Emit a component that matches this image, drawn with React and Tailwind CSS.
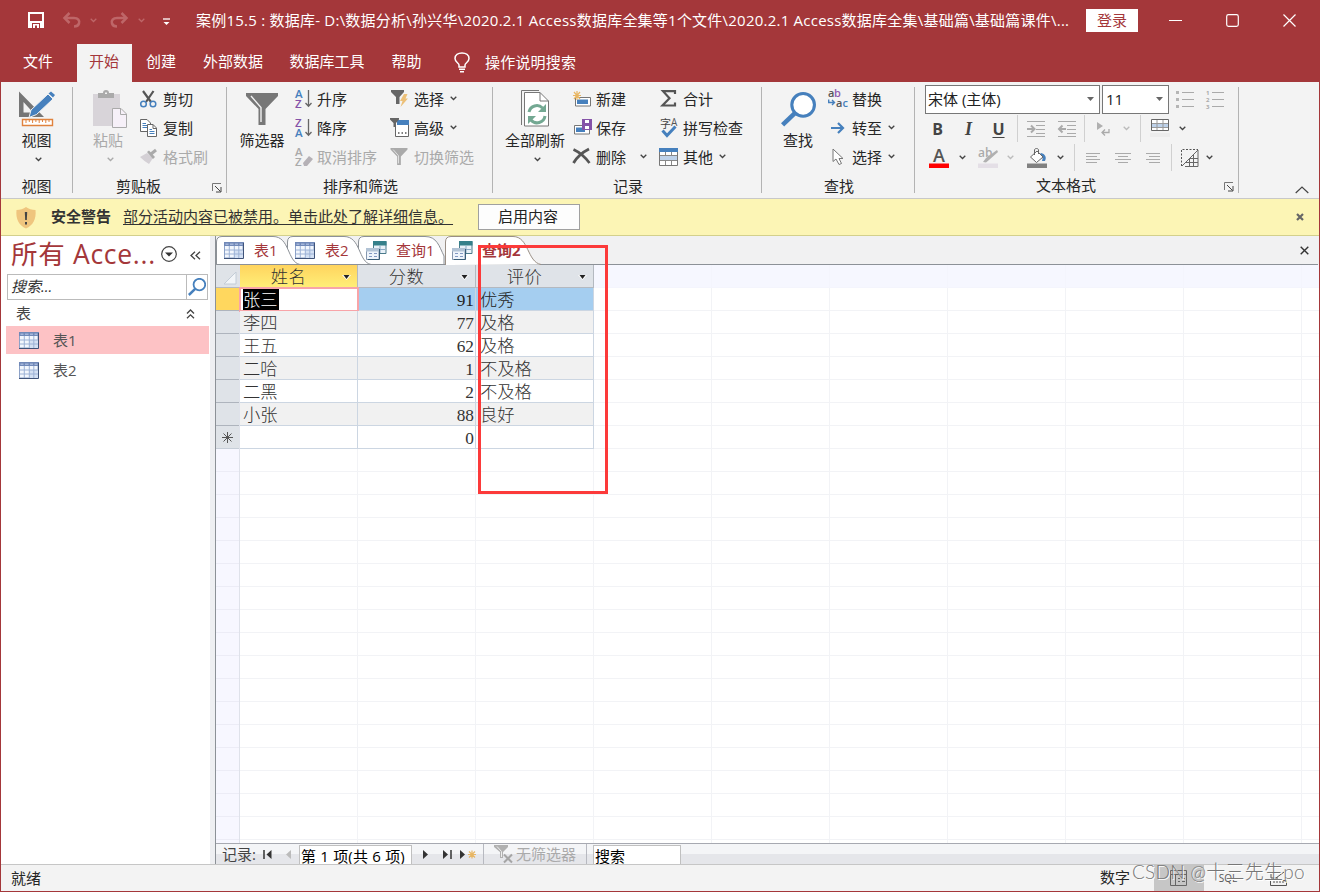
import { Fragment } from "react";
import clsx from "clsx";

const MENU = [
  { label: "创建", width: "w-[58px]" },
  { label: "外部数据", width: "w-[86px]" },
  { label: "数据库工具", width: "w-[102px]" },
  { label: "帮助", width: "w-[57px]" },
];

const ROWS = [
  { name: "张三", score: 91, grade: "优秀" },
  { name: "李四", score: 77, grade: "及格" },
  { name: "王五", score: 62, grade: "及格" },
  { name: "二哈", score: 1, grade: "不及格" },
  { name: "二黑", score: 2, grade: "不及格" },
  { name: "小张", score: 88, grade: "良好" },
];

/* ── icons ── */

function Svg({ w, h, children, className }) {
  return (
    <svg width={w} height={h} viewBox={`0 0 ${w} ${h}`} fill="none" className={clsx("block shrink-0 overflow-visible", className)}>
      {children}
    </svg>
  );
}

function Chevron({ color = "#444", className }) {
  return (
    <Svg w={7} h={5} className={className}>
      <path d="M0.7 0.8L3.5 3.5L6.3 0.8" stroke={color} strokeWidth="1.3" />
    </Svg>
  );
}

function Triangle({ color = "#666" }) {
  return (
    <Svg w={7} h={4}>
      <path d="M0 0H7L3.5 4Z" fill={color} />
    </Svg>
  );
}

function SaveIcon() {
  return (
    <Svg w={16} h={16}>
      <path d="M1 1H15V15H1Z" stroke="#fff" strokeWidth="2" />
      <path d="M2 9H14V15H2Z" fill="#fff" />
      <path d="M4 11H12V16H4Z" fill="#a4373a" />
      <path d="M5 12H11V16H9V13.5H7V16H5Z" fill="#fff" />
    </Svg>
  );
}

function UndoIcon({ flip }) {
  return (
    <Svg w={18} h={16} className={flip ? "-scale-x-100" : ""}>
      <path d="M2 6H11C15 6 17 8.5 16 11.5C15.3 13.6 13.5 14.5 11 14.5" stroke="#be6668" strokeWidth="2.5" />
      <path d="M6.5 1L1.5 6L6.5 11" stroke="#be6668" strokeWidth="2.5" />
    </Svg>
  );
}

function BulbIcon() {
  return (
    <Svg w={16} h={21}>
      <path d="M5 15V13C5 11 1 10 1 6.5C1 3 4 1 8 1S15 3 15 6.5C15 10 11 11 11 13V15Z" stroke="#fff" strokeWidth="1.5" />
      <path d="M5 17.3H11M6 19.7H10" stroke="#fff" strokeWidth="1.6" />
    </Svg>
  );
}

function DesignViewIcon() {
  return (
    <Svg w={38} h={38}>
      <path fillRule="evenodd" d="M1 1.5V27H26ZM5.5 12L15 22.5H5.5Z" fill="#767676" />
      <path d="M11 27.5L13 20L30 4L35 9L18.500 24.500Z" fill="#4680bd" stroke="#f3f3f3" strokeWidth="1" />
      <path d="M30.500 3.500L33 1.500L37 5L35 7.500Z" fill="#4680bd" />
      <path d="M4.500 29.500H34.500V35.500H4.500Z" fill="#fff" stroke="#e0823d" strokeWidth="1.400" />
      <path d="M8 30V33M11.300 30V32M14.600 30V33M17.900 30V32M21.200 30V33M24.500 30V32M27.800 30V33M31 30V32" stroke="#e0823d" />
    </Svg>
  );
}

function PasteIcon() {
  return (
    <Svg w={36} h={39}>
      <path d="M1 4H28V36H1Z" fill="#d8d4d9" />
      <path d="M6 3H11C11 1 12 0 14 0S17 1 17 3H22V8H6Z" fill="#aaa" />
      <path d="M13 2.500H15V4H13Z" fill="#f3f3f3" />
      <path d="M20.500 18.500H29L34.500 24V37.500H20.500Z" fill="#f6f0f8" stroke="#aaa" />
      <path d="M28.500 18.500V24.500H34.500" stroke="#aaa" />
    </Svg>
  );
}

function CutIcon() {
  return (
    <Svg w={17} h={18}>
      <path d="M3 1L11 12M13.500 1L6 12" stroke="#555" strokeWidth="2.200" />
      <circle cx="3.500" cy="14" r="2.800" stroke="#4680bd" strokeWidth="1.500" />
      <circle cx="13" cy="14" r="2.800" stroke="#4680bd" strokeWidth="1.500" />
    </Svg>
  );
}

function CopyIcon() {
  return (
    <Svg w={18} h={18}>
      <path d="M.5 .5H7L10.500 4V12.500H.5Z" fill="#fff" stroke="#666" />
      <path d="M2.500 4.500H6M2.500 6.500H7M2.500 8.500H7" stroke="#4680bd" />
      <path d="M7.500 5.500H13L16.500 9V17.500H7.500Z" fill="#fff" stroke="#666" />
      <path d="M13 5.500V9.500H16.500" stroke="#666" />
      <path d="M9.500 10.500H12M9.500 12.500H14.500M9.500 14.500H14.500" stroke="#4680bd" />
    </Svg>
  );
}

function BrushIcon() {
  return (
    <Svg w={18} h={16}>
      <path d="M0 8L7 4L13 9L9 15C6 13 3 11 0 8Z" fill="#d4d0d5" />
      <path d="M7 3L9 1.500L15 8L13 10Z" fill="#aaa" />
      <path d="M11 5L16 1" stroke="#aaa" strokeWidth="3" />
    </Svg>
  );
}

function FunnelIcon({ w, h, color = "#777" }) {
  return (
    <svg width={w} height={h} viewBox="0 0 32 32" fill="none" className="block shrink-0">
      <path d="M0 0H32V3L19.500 16V32H12.500V16L0 3Z" fill={color} />
      <path d="M5 3L15 14.500V29" stroke="#f3f3f3" strokeWidth="1.400" />
    </svg>
  );
}

function SortIcon({ top, bottom, topColor, bottomColor, clear }) {
  return (
    <Svg w={19} h={20}>
      <text x="0" y="9" fontSize="11.500" fontWeight="600" fill={topColor}>{top}</text>
      <text x="0" y="19" fontSize="11.500" fontWeight="600" fill={bottomColor}>{bottom}</text>
      {clear ? (
        <path d="M8 16L14 9L18 12L12 19H9Z" fill="#b5b1b6" />
      ) : (
        <path d="M13.500 1V17M10.500 14L13.500 17.300L16.500 14" stroke="#666" strokeWidth="1.300" />
      )}
    </Svg>
  );
}

function SelectFilterIcon() {
  return (
    <Svg w={19} h={18}>
      <path d="M1 0H14V2L9.500 7V14H6V7L1 2Z" fill="#666" />
      <path d="M14 4H17.500L15.500 8.500H18L10.500 17L12.500 11H10Z" fill="#ecc078" />
    </Svg>
  );
}

function AdvancedIcon() {
  return (
    <Svg w={20} h={19}>
      <path d="M5.500 3.500H18.500V18.500H5.500Z" fill="#fff" stroke="#666" />
      <path d="M7 2H19V7H7Z" fill="#4680bd" />
      <path d="M0 0H9V1.500L6 5V9H3.500V5L0 1.500Z" fill="#666" />
      <path d="M8 15H9.500M11.500 15H13M15 15H16.500" stroke="#555" strokeWidth="1.500" />
    </Svg>
  );
}

function RefreshIcon() {
  return (
    <Svg w={29} h={37}>
      <path d="M.5 35V.5H18" stroke="#777" />
      <path d="M3.500 2.500H19L27.500 11V36H3.500Z" fill="#fff" stroke="#777" />
      <path d="M19 2.500V11H27.500" stroke="#777" />
      <path d="M8 22A8 8 0 0 1 21.500 18M24 26A8 8 0 0 1 10 30" stroke="#73a892" strokeWidth="3" />
      <path d="M25 14V22H17ZM7 34V26H15Z" fill="#73a892" />
    </Svg>
  );
}

function NewRecordIcon() {
  return (
    <Svg w={18} h={16}>
      <path d="M2.500 6.500H17.500V15H2.500Z" fill="#fff" stroke="#777" />
      <path d="M4 8.500H15V13H4Z" fill="#4680bd" />
      <path d="M4 0V9M0 4.500H8M1 1L7 8M7 1L1 8" stroke="#e8b663" strokeWidth="1.200" />
    </Svg>
  );
}

function SaveRecordIcon() {
  return (
    <Svg w={19} h={17}>
      <path d="M1.500 6.500H16.500V15H1.500Z" fill="#fff" stroke="#777" />
      <path d="M3 8.500H12V13H3Z" fill="#4680bd" />
      <path d="M9 0H19V11H9Z" fill="#8552a8" />
      <path d="M12 1H16V4H12ZM12 7H16V10H12Z" fill="#fff" />
    </Svg>
  );
}

function DeleteIcon() {
  return (
    <Svg w={19} h={17}>
      <path d="M1.500 1.500C7 4 13 9 17.500 15" stroke="#555" strokeWidth="2.600" />
      <path d="M17 1C11 4 5 9 1.500 15" stroke="#555" strokeWidth="2.800" />
    </Svg>
  );
}

function SigmaIcon() {
  return (
    <Svg w={15} h={17}>
      <path d="M14 4V1.200H2L8.500 8.300L1.500 15.500H14V12.500" stroke="#555" strokeWidth="2.200" />
    </Svg>
  );
}

function SpellIcon() {
  return (
    <Svg w={19} h={20}>
      <text x="0" y="10" fontSize="11" fill="#444">字</text>
      <text x="11" y="8" fontSize="10" fill="#555">A</text>
      <path d="M2.500 12.500L7 17.500L15.500 8.500" stroke="#4680bd" strokeWidth="3" />
    </Svg>
  );
}

function MoreIcon() {
  return (
    <Svg w={19} h={18}>
      <path d="M.5 .5H18.500V17.500H.5Z" fill="#fff" stroke="#777" />
      <path d="M0 0H19V4H0Z" fill="#4680bd" />
      <path d="M1 7.500H18V12H1Z" fill="#bed2ea" />
      <path d="M1 7.500H18M1 12.500H18M6.500 4V7M12.500 4V7M6.500 12V17M12.500 12V17" stroke="#888" />
    </Svg>
  );
}

function SearchIcon({ size, stroke = 3 }) {
  return (
    <svg width={size} height={size} viewBox="0 0 34 34" fill="none" className="block shrink-0">
      <path d="M1.500 32L13.500 20.500" stroke="#4680bd" strokeWidth={stroke + 1.5} />
      <circle cx="21.500" cy="12.500" r="11" fill="#fff" stroke="#4680bd" strokeWidth={stroke} />
    </svg>
  );
}

function ReplaceIcon() {
  return (
    <Svg w={20} h={19}>
      <text x="0" y="8" fontSize="11" fontWeight="600" fill="#555">a</text>
      <text x="6" y="8" fontSize="11" fontWeight="600" fill="#8f5cb0">b</text>
      <text x="8" y="17.500" fontSize="11" fontWeight="600" fill="#555">a</text>
      <text x="14.500" y="17.500" fontSize="11" fontWeight="600" fill="#4680bd">c</text>
      <path d="M.7 10.500V13.500H6M4 11L6.500 13.500L4 16" stroke="#4680bd" strokeWidth="1.400" />
    </Svg>
  );
}

function GotoIcon() {
  return (
    <Svg w={14} h={12}>
      <path d="M0 6H12M7 1L12 6L7 11" stroke="#4680bd" strokeWidth="2.200" />
    </Svg>
  );
}

function PointerIcon() {
  return (
    <Svg w={12} h={18}>
      <path d="M1 1V13.500L4 11L7 16.500L9.500 15.500L7 10.500H11Z" fill="#fff" stroke="#777" />
    </Svg>
  );
}

function LinesIcon({ lines, children, w = 18, h = 18, color = "#aaa" }) {
  return (
    <Svg w={w} h={h}>
      {lines.map(([x1, x2, y]) => (
        <path key={`${x1}-${y}`} d={`M${x1} ${y}H${x2}`} stroke={color} />
      ))}
      {children}
    </Svg>
  );
}

function DatasheetIcon() {
  return (
    <Svg w={20} h={17}>
      <path d="M.5 .5H19V16H.5Z" fill="#f3f7fd" stroke="#8da2c8" />
      <path d="M0 0H20V4H0Z" fill="#7189b8" />
      <path d="M1.500 1.500H4.500V3H1.500ZM6 1.500H9.500V3H6ZM11 1.500H14V3H11ZM15.500 1.500H18.500V3H15.500Z" fill="#a3b6da" />
      <path d="M10 8H19V16H10Z" fill="#d3e0f3" />
      <path d="M1 8H19M1 12H19M5.300 4V16M10.300 4V16M14.800 4V16" stroke="#9db2d6" />
      <path d="M19.500 1V16.500H0" stroke="#3f5379" />
    </Svg>
  );
}

function QueryIcon() {
  return (
    <Svg w={21} h={19}>
      <path d="M7.500 .5H20V12.500H7.500Z" fill="#e9f1f8" stroke="#4a7a8b" />
      <path d="M7 0H20.500V4.500H7Z" fill="#35808a" />
      <path d="M14 5V12M10 8.500H19" stroke="#8aa9c4" />
      <path d="M.5 7.500H13V18.500H.5Z" fill="#eef4fb" stroke="#8597ae" />
      <path d="M0 7H13V10.500H0Z" fill="#b2c3d5" />
      <path d="M3 12.500H6M3 15.500H6M8 12.500H11M8 15.500H11" stroke="#8298c2" />
      <path d="M13.500 8V18.500H2" stroke="#385d78" />
    </Svg>
  );
}

function LauncherIcon() {
  return (
    <Svg w={10} h={10}>
      <path d="M.5 8V.5H9" stroke="#777" />
      <path d="M3 3L8.500 8.500M9 4V9H4" stroke="#444" />
    </Svg>
  );
}

/* ── ribbon pieces ── */

function Divider() {
  return <div className="mt-[2px] h-[106px] w-px shrink-0 bg-[#b3b3b3]" />;
}

function Group({ label, width, launcher, labelPad = "pr-[3px]", children }) {
  return (
    <div className={clsx("flex shrink-0 flex-col", width)}>
      <div className="flex h-[88px]">{children}</div>
      <div className="flex h-[25px] items-center">
        <span className="w-4 shrink-0" />
        <span className={clsx("flex-1 text-center", labelPad)}>{label}</span>
        <span className="w-[14px] shrink-0 pt-[4px]">{launcher && <LauncherIcon />}</span>
      </div>
    </div>
  );
}

function BigButton({ icon, label, width, disabled, menu }) {
  return (
    <div className={clsx("flex shrink-0 flex-col items-center", width, disabled && "text-[#aaa]")}>
      <div className="flex h-[43px] items-start pt-[5px]">{icon}</div>
      <div className="flex h-6 items-center pb-px whitespace-nowrap">{label}</div>
      {menu && <Chevron color={disabled ? "#aaa" : "#444"} className="mt-[5px] ml-1" />}
    </div>
  );
}

function SmallButton({ icon, label, disabled, menu, gap = "ml-[6px]", iconWidth = "w-6" }) {
  return (
    <div className={clsx("flex h-[29px] items-center pb-[2px] whitespace-nowrap", disabled && "text-[#aaa]")}>
      <span className={clsx("flex shrink-0", iconWidth)}>{icon}</span>
      {label}
      {menu && <Chevron className={gap} />}
    </div>
  );
}

function Cell({ w, children }) {
  return <div className={clsx("flex h-[29px] shrink-0 items-center justify-center", w)}>{children}</div>;
}

function Rule() {
  return <div className="h-[27px] w-px shrink-0 bg-[#d0d0d0]" />;
}

function TitleBar() {
  return (
    <div className="flex h-[43px] items-center pb-[3px] text-white">
      <div className="ml-[27px] flex items-center">
        <SaveIcon />
        <span className="ml-[19px]"><UndoIcon /></span>
        <Chevron color="#be6668" className="ml-[9px]" />
        <span className="ml-[13px]"><UndoIcon flip /></span>
        <Chevron color="#be6668" className="ml-[10px]" />
        <Svg w={7} h={8} className="mt-1 ml-[18px]">
          <path d="M0 1H7" stroke="#fff" strokeWidth="1.300" />
          <path d="M.5 4H6.500L3.500 7Z" fill="#fff" />
        </Svg>
      </div>
      <div className="ml-[26px] w-[882px] whitespace-nowrap tracking-[0.23px]">
        案例15.5 : 数据库- D:\数据分析\孙兴华\2020.2.1 Access数据库全集等1个文件\2020.2.1 Access数据库全集\基础篇\基础篇课件\...
      </div>
      <button className="ml-[8px] h-[23px] w-[52px] bg-white pb-px text-[#a4373a]">登录</button>
      <Svg w={13} h={1} className="ml-[31px]"><path d="M0 .5H13" stroke="#fff" /></Svg>
      <Svg w={13} h={13} className="ml-[44px]"><rect x=".7" y=".7" width="11.600" height="11.600" rx="1.800" stroke="#fff" strokeWidth="1.200" /></Svg>
      <Svg w={13} h={13} className="ml-[44px]"><path d="M.5 .5L12.500 12.500M12.500 .5L.5 12.500" stroke="#fff" strokeWidth="1.200" /></Svg>
    </div>
  );
}

function MenuBar() {
  return (
    <div className="flex h-[39px] items-end text-white">
      <div className="flex h-[38px] w-[76px] items-center justify-center pr-[2px] pb-[4px]">文件</div>
      <div className="flex h-[38px] w-[55px] items-center justify-center bg-[#f3f3f3] pr-px pb-[4px] text-[#a4373a]">开始</div>
      {MENU.map((item) => (
        <div key={item.label} className={clsx("flex h-[38px] items-center justify-center pb-[4px]", item.width)}>
          {item.label}
        </div>
      ))}
      <div className="ml-[19px] flex h-[38px] items-center pb-[2px]">
        <BulbIcon />
        <span className="ml-[15px] tracking-[0.2px]">操作说明搜索</span>
      </div>
    </div>
  );
}

function TextFormat() {
  return (
    <div className="flex flex-col">
      <div className="ml-[10px] flex h-[32px] items-start pt-[2px]">
        <div className="mt-px flex h-[29px] w-[175px] items-center justify-between border border-[#777] bg-white pr-[5px] pb-px pl-[2px] text-[#222]">
          宋体 (主体) <Triangle />
        </div>
        <div className="mt-px ml-[2px] flex h-[29px] w-[67px] items-center justify-between border border-[#777] bg-white pr-[5px] pb-px pl-[3px] text-[#222]">
          11 <Triangle />
        </div>
        <div className="mt-[6px] ml-[7px]">
          <LinesIcon lines={[[6, 18, 2.5], [6, 18, 9.5], [6, 18, 16.5]]}>
            <path d="M0 1H3V4H0ZM0 8H3V11H0ZM0 15H3V18H0Z" fill="#b5b5b5" />
          </LinesIcon>
        </div>
        <div className="mt-[6px] ml-[12px]">
          <LinesIcon lines={[[6, 18, 2.5], [6, 18, 9.5], [6, 18, 16.5]]}>
            <g fontSize="6" fontWeight="700" fill="#aaa">
              <text x="0" y="4.500">1</text>
              <text x="0" y="11.500">2</text>
              <text x="0" y="18.500">3</text>
            </g>
          </LinesIcon>
        </div>
      </div>
      <div className="ml-[9px] flex h-[29px] items-center text-[#444]">
        <Cell w="w-[27px]"><b className="text-base">B</b></Cell>
        <Cell w="w-[35px]"><i className="font-['Liberation_Serif',serif] text-[18px] font-bold">I</i></Cell>
        <Cell w="w-[25px]"><b className="text-base underline underline-offset-2">U</b></Cell>
        <Cell w="w-[6px]" />
        <Rule />
        <Cell w="w-[36px]">
          <LinesIcon lines={[[0, 18, 1.5], [9, 18, 5.5], [9, 18, 9.5], [9, 18, 13.5], [0, 18, 16.5]]}>
            <path d="M0 9H7M4 5.500L7.500 9L4 12.500" stroke="#aaa" strokeWidth="2" />
          </LinesIcon>
        </Cell>
        <Cell w="w-[25px]">
          <LinesIcon lines={[[0, 18, 1.5], [9, 18, 5.5], [9, 18, 9.5], [9, 18, 13.5], [0, 18, 16.5]]}>
            <path d="M8 9H1M4.500 5.500L1 9L4.500 12.500" stroke="#aaa" strokeWidth="2" />
          </LinesIcon>
        </Cell>
        <Cell w="w-[5px]" />
        <Rule />
        <Cell w="w-[36px]">
          <Svg w={13} h={15}>
            <path d="M0 1L6 5L0 9Z" fill="#b0b0b0" />
            <path d="M12 8V11.500H5M8 8.500L5 11.500L8 14.500" stroke="#aaa" strokeWidth="1.300" />
          </Svg>
        </Cell>
        <Cell w="w-[10px]"><Chevron color="#bbb" /></Cell>
        <Cell w="w-[9px]" />
        <Rule />
        <Cell w="w-[37px]">
          <Svg w={20} h={18} className="-mt-px">
            <path d="M1.500 .5H18.500V11.500H1.500Z" fill="#fff" stroke="#666" />
            <path d="M2 4H18V8H2Z" fill="#bed2ea" />
            <path d="M2 4.500H18M2 8.500H18M7 1V11M13 1V11" stroke="#999" />
            <path d="M0 14H20V18H0Z" fill="#ececec" />
          </Svg>
        </Cell>
        <Cell w="w-[8px]"><Chevron /></Cell>
      </div>
      <div className="ml-[10px] flex h-[29px] items-center text-[#555]">
        <Cell w="w-[28px]">
          <Svg w={20} h={20}>
            <text x="10" y="13.500" textAnchor="middle" fontSize="18" fontWeight="600" fill="#555">A</text>
            <path d="M0 15.500H20V20H0Z" fill="#f00" />
          </Svg>
        </Cell>
        <Cell w="w-[18px]"><Chevron /></Cell>
        <Cell w="w-[34px]">
          <Svg w={20} h={20}>
            <text x="0" y="9" fontSize="12" fontWeight="600" fill="#aaa">ab</text>
            <path d="M5 14L8 10L19 2L20 4L11 12L8 14.500Z" fill="#b0b0b0" />
            <path d="M0 15.500H20V20H0Z" fill="#e4dfe6" />
          </Svg>
        </Cell>
        <Cell w="w-[10px]"><Chevron color="#bbb" /></Cell>
        <Cell w="w-[43px]">
          <Svg w={20} h={20}>
            <path d="M14 5C18 6 20 9 18 13L15 13C16 10 16 8 13 6Z" fill="#4680bd" />
            <path d="M3.500 9L10 3L16 9L9.500 14.500Z" fill="#fff" stroke="#666" />
            <path d="M7.500 7V2C7.500 0 11.500 0 11.500 2V6" stroke="#666" />
            <path d="M0 15.500H20V20H0Z" fill="#808080" />
          </Svg>
        </Cell>
        <Cell w="w-[4px]"><Chevron /></Cell>
        <Cell w="w-[12px]" />
        <Rule />
        <Cell w="w-[36px]"><LinesIcon w={15} h={12} lines={[[0, 14, 1.5], [0, 11, 4.5], [0, 14, 7.5], [0, 11, 10.5]]} /></Cell>
        <Cell w="w-[24px]"><LinesIcon w={17} h={12} lines={[[0, 16, 1.5], [3, 13, 4.5], [0, 16, 7.5], [3, 13, 10.5]]} /></Cell>
        <Cell w="w-[36px]"><LinesIcon w={15} h={12} lines={[[0, 14, 1.5], [3, 14, 4.5], [0, 14, 7.5], [3, 14, 10.5]]} /></Cell>
        <Rule />
        <Cell w="w-[36px]">
          <Svg w={18} h={18}>
            <path d="M.5 17V.5H17" stroke="#555" strokeDasharray="2 1.500" />
            <path d="M1 17L17 1V17.500H4M5 13.500H17M9 9.500H17M8.500 10V17M12.500 6V17" stroke="#666" />
          </Svg>
        </Cell>
        <Cell w="w-[3px]"><Chevron /></Cell>
      </div>
    </div>
  );
}

function Ribbon() {
  return (
    <div className="flex h-[116px] bg-[#f3f3f3] pt-[3px] text-[#262626]">
      <Group label="视图" width="w-[71px]" labelPad="pr-[2px]">
        <BigButton icon={<DesignViewIcon />} label="视图" width="w-[71px]" menu />
      </Group>
      <Divider />
      <Group label="剪贴板" width="w-[153px]" launcher labelPad="pr-[24px]">
        <BigButton icon={<span className="ml-[4px]"><PasteIcon /></span>} label="粘贴" width="ml-[7px] w-[56px]" disabled menu />
        <div className="ml-[3px] flex flex-col">
          <SmallButton icon={<span className="ml-px"><CutIcon /></span>} label="剪切" />
          <SmallButton icon={<span className="ml-px"><CopyIcon /></span>} label="复制" />
          <SmallButton icon={<span className="ml-px"><BrushIcon /></span>} label="格式刷" disabled />
        </div>
      </Group>
      <Divider />
      <Group label="排序和筛选" width="w-[265px]" labelPad="">
        <BigButton icon={<span className="mt-[3px]"><FunnelIcon w={32} h={32} /></span>} label="筛选器" width="ml-[7px] w-[56px]" />
        <div className="ml-[5px] flex w-[95px] flex-col">
          <SmallButton icon={<SortIcon top="A" bottom="Z" topColor="#4680bd" bottomColor="#8552a8" />} label="升序" iconWidth="w-[22px]" />
          <SmallButton icon={<SortIcon top="Z" bottom="A" topColor="#8552a8" bottomColor="#4680bd" />} label="降序" iconWidth="w-[22px]" />
          <SmallButton icon={<SortIcon top="A" bottom="Z" topColor="#aaa" bottomColor="#aaa" clear />} label="取消排序" iconWidth="w-[22px]" disabled />
        </div>
        <div className="flex flex-col">
          <SmallButton icon={<SelectFilterIcon />} label="选择" menu />
          <SmallButton icon={<AdvancedIcon />} label="高级" menu />
          <SmallButton icon={<FunnelIcon w={18} h={17} color="#aaa" />} label="切换筛选" disabled />
        </div>
      </Group>
      <Divider />
      <Group label="记录" width="w-[268px]" labelPad="">
        <BigButton icon={<RefreshIcon />} label="全部刷新" width="ml-[10px] w-[64px]" menu />
        <div className="ml-[5px] flex w-[87px] flex-col">
          <SmallButton icon={<span className="ml-px"><NewRecordIcon /></span>} label="新建" />
          <SmallButton icon={<span className="ml-px"><SaveRecordIcon /></span>} label="保存" />
          <SmallButton icon={<DeleteIcon />} label="删除" menu gap="ml-[14px]" />
        </div>
        <div className="flex flex-col">
          <SmallButton icon={<span className="ml-[2px]"><SigmaIcon /></span>} label="合计" />
          <SmallButton icon={<span className="ml-px"><SpellIcon /></span>} label="拼写检查" />
          <SmallButton icon={<MoreIcon />} label="其他" menu />
        </div>
      </Group>
      <Divider />
      <Group label="查找" width="w-[152px]" labelPad="">
        <BigButton icon={<span className="mt-[2px]"><SearchIcon size={35} /></span>} label="查找" width="ml-[8px] w-[56px]" />
        <div className="ml-[2px] flex flex-col">
          <SmallButton icon={<ReplaceIcon />} label="替换" />
          <SmallButton icon={<span className="ml-[3px]"><GotoIcon /></span>} label="转至" menu />
          <SmallButton icon={<span className="ml-[4px]"><PointerIcon /></span>} label="选择" menu />
        </div>
      </Group>
      <Divider />
      <div className="-mt-[3px] flex h-[116px] w-[323px] shrink-0 flex-col">
        <TextFormat />
        <div className="flex h-[25px] items-center pt-px">
          <span className="flex-1 pr-[7px] text-center">文本格式</span>
          <span className="w-[14px] pt-1"><LauncherIcon /></span>
        </div>
      </div>
      <Divider />
      <div className="flex flex-1 items-end justify-end pr-[10px] pb-[4px]">
        <Svg w={14} h={8}><path d="M.7 7L7 1L13.300 7" stroke="#444" strokeWidth="1.200" /></Svg>
      </div>
    </div>
  );
}

function SecurityBar() {
  return (
    <div className="flex h-[38px] items-center border-t border-b border-t-[#c8c8c8] border-b-[#d3d08c] bg-[#fcf5b5] text-[#333]">
      <Svg w={20} h={22} className="mt-px ml-[15px]">
        <path d="M10 0C12.500 2 16 3 19.500 3C20.500 12 17 18.500 10 21.500C3 18.500 -.5 12 .5 3C4 3 7.500 2 10 0Z" fill="#efc57e" />
        <path d="M8.800 5H11.200L10.800 13H9.200Z" fill="#444" />
        <path d="M9 15H11V17.500H9Z" fill="#444" />
      </Svg>
      <b className="ml-[15px] pb-[2px]">安全警告</b>
      <span className="ml-[12px] w-[355px] pb-[2px] whitespace-nowrap underline underline-offset-2">部分活动内容已被禁用。单击此处了解详细信息。</span>
      <button className="h-[26px] w-[102px] border border-[#a0a0a0] bg-[#fdfdfd] pr-[2px] pb-[2px] text-[#222]">启用内容</button>
      <Svg w={8} h={8} className="mr-[15px] ml-auto"><path d="M1 1L7 7M7 1L1 7" stroke="#666" strokeWidth="2.200" /></Svg>
    </div>
  );
}

function NavPane() {
  return (
    <div className="flex w-[209px] shrink-0 flex-col bg-white">
      <div className="flex h-[38px] items-center pb-[2px] pl-[10px] text-[#a4373a]">
        <span className="w-[150px] text-[26.500px] tracking-[0.700px] whitespace-nowrap">所有 Acce...</span>
        <Svg w={16} h={16}>
          <circle cx="8" cy="8" r="7.300" stroke="#444" strokeWidth="1.200" />
          <path d="M4 6.500H12L8 10.500Z" fill="#333" />
        </Svg>
        <Svg w={11} h={9} className="mt-[2px] ml-[13px]"><path d="M5 .7L1 4.500L5 8.300M10 .7L6 4.500L10 8.300" stroke="#444" strokeWidth="1.300" /></Svg>
      </div>
      <div className="ml-[6px] flex h-[26px] w-[201px] border border-[#bbb]">
        <i className="flex flex-1 items-center pb-[2px] pl-[3px] text-[#333]">搜索...</i>
        <span className="flex w-[21px] items-center justify-center border-l border-[#bbb]"><SearchIcon size={18} stroke={3.4} /></span>
      </div>
      <div className="flex h-[26px] items-center pr-[15px] pl-[15px] text-[#444]">
        <span className="flex-1">表</span>
        <Svg w={9} h={10} className="mt-px"><path d="M1 4.500L4.500 1L8 4.500M1 9.300L4.500 5.800L8 9.300" stroke="#444" strokeWidth="1.300" /></Svg>
      </div>
      <div className="mr-px ml-[5px] flex h-[28px] items-center bg-[#fdc2c5] pl-[13px] text-[#555]">
        <DatasheetIcon /> <span className="ml-[14px]">表1</span>
      </div>
      <div className="mt-[2px] ml-[5px] flex h-[28px] items-center pl-[13px] text-[#555]">
        <DatasheetIcon /> <span className="ml-[14px]">表2</span>
      </div>
    </div>
  );
}

function DocumentTabs() {
  return (
    <div className="relative flex h-[29px] shrink-0 items-center bg-[#f1f1f2] pb-px text-[#a4373a]">
      <svg width="1102" height="29" viewBox="0 0 1102 29" fill="#fff" className="absolute top-0 left-0" stroke="#8c9197">
        <path d="M0 28.500H1102" />
        <path d="M142.500 28.500V6Q142.500 .5 148 .5H209C221 .5 223 10 228 20V28.500Z" />
        <path d="M71.500 28.500V6Q71.500 .5 77 .5H128C145 .5 142 26 155 28.500Z" />
        <path d="M.5 28.500V6Q.5 .5 6 .5H57C74 .5 71 26 84 28.500Z" />
        <path d="M229.500 29V6Q229.500 .5 235 .5H297C313 .5 311 26 325 28.500" stroke="#9a8f85" />
      </svg>
      <div className="relative flex w-[71px] items-center pl-[8px]"><DatasheetIcon /><span className="ml-[10px]">表1</span></div>
      <div className="relative flex w-[71px] items-center pl-[8px]"><DatasheetIcon /><span className="ml-[10px]">表2</span></div>
      <div className="relative flex w-[86px] items-center pl-[8px]"><QueryIcon /><span className="ml-[9px]">查询1</span></div>
      <div className="relative flex flex-1 items-center pl-[8px]"><QueryIcon /><b className="ml-[9px]">查询2</b></div>
      <Svg w={9} h={9} className="relative mr-[10px]"><path d="M.7 .7L8.300 8.300M8.300 .7L.7 8.300" stroke="#333" strokeWidth="1.400" /></Svg>
    </div>
  );
}

function HeaderCell({ label, selected }) {
  return (
    <div
      className={clsx(
        "flex h-[23px] w-[118px] items-center border-r border-b border-[#b4b9c0] pr-[6px]",
        selected ? "bg-linear-to-b from-[#ffd45e] to-[#ffee77]" : "bg-[#dfe3e8]"
      )}
    >
      <span className="flex-1 pt-[3px] pr-[5px] text-center tracking-[0.500px]">{label}</span>
      <Svg w={9} h={5} className="mt-[3px]"><path d="M0 0H9L4.500 5Z" fill="#fff" /><path d="M1.500 0H7.500L4.500 4Z" fill="#222" /></Svg>
    </div>
  );
}

function Datasheet() {
  return (
    <div className="flex min-h-0 flex-1 bg-white font-['Liberation_Serif','Noto_Sans_CJK_SC',serif] text-[17.300px] leading-[22px] font-light text-[#333]">
      {/* row selectors */}
      <div className="flex w-[24px] shrink-0 flex-col border-r border-[#dfe2ea] bg-[#f7f7ff]">
        <div className="flex h-[23px] items-end justify-end border-b border-[#b4b9c0] bg-[#dfe3e8] p-[3px]">
          <Svg w={12} h={12}><path d="M12 0V12H0Z" fill="#f2f5f8" stroke="#c3ccd6" /></Svg>
        </div>
        {ROWS.map((row, i) => (
          <div key={row.name} className={clsx("h-[23px] border-b border-[#aeb4bd]", i === 0 ? "bg-[#ffd75e]" : "bg-[#dfe3e8]")} />
        ))}
        <div className="flex h-[23px] items-center justify-center border-b border-[#c6ced8] bg-[#dfe3e8]">
          <Svg w={11} h={11}><path d="M5.500 0V11M0 5.500H11M1.500 1.500L9.500 9.500M9.500 1.500L1.500 9.500" stroke="#555" /></Svg>
        </div>
        <div className="flex-1 bg-[linear-gradient(to_bottom,transparent_22px,#ececf6_22px)] bg-[size:100%_23px]" />
      </div>

      <div className="flex flex-1 flex-col bg-[linear-gradient(to_right,transparent_117px,#f2f3f6_117px),linear-gradient(to_bottom,transparent_22px,#f2f3f6_22px)] bg-[size:118px_23px]">
        <div className="flex h-[23px] bg-[#f4f5ff]/80">
          <HeaderCell label="姓名" selected />
          <HeaderCell label="分数" />
          <HeaderCell label="评价" />
        </div>
        {ROWS.map((row, i) => (
          <div
            key={row.name}
            className={clsx("flex h-[23px] w-[354px]", i === 0 ? "bg-[#a5cef0] text-[#222]" : i % 2 ? "bg-[#f1f1f1]" : "bg-white")}
          >
            {i === 0 ? (
              <div className="-mt-px -ml-px h-[25px] w-[120px] shrink-0 border-2 border-[#f8a4a8] bg-white pl-[2px]">
                <span className="block h-[21px] w-[36px] bg-black pt-px leading-[22px] text-white">{row.name}</span>
              </div>
            ) : (
              <div className="w-[118px] shrink-0 border-r border-b border-[#ccd6e2] pt-[2px] pl-[3px]">{row.name}</div>
            )}
            <div className={clsx("border-r border-b border-[#ccd6e2] pt-[2px] pr-[1px] text-right", i === 0 ? "w-[117px]" : "w-[118px]")}>{row.score}</div>
            <div className="w-[118px] border-r border-b border-[#ccd6e2] pt-[2px] pl-[4px]">{row.grade}</div>
          </div>
        ))}
        <div className="flex h-[23px] w-[354px] bg-white">
          {["", "0", ""].map((value, i) => (
            <div key={i} className="w-[118px] border-r border-b border-[#ccd6e2] pt-[2px] pr-[1px] text-right">{value}</div>
          ))}
        </div>
      </div>
    </div>
  );
}

function RecordBar() {
  return (
    <div className="flex h-[21px] shrink-0 items-center overflow-hidden border-t border-[#a7a9b1] bg-[linear-gradient(to_bottom,#f4f5f7_50%,#e5e6ea_50%)] text-[#444]">
      <span className="ml-[6px] w-[41px] whitespace-nowrap">记录:</span>
      <Svg w={9} h={9}><path d="M1 0V9" stroke="#333" strokeWidth="1.500" /><path d="M8.500 0V9L3.500 4.500Z" fill="#333" /></Svg>
      <Svg w={5} h={9} className="ml-[14px]"><path d="M5 0V9L0 4.500Z" fill="#bbb" /></Svg>
      <div className="mt-px ml-[8px] h-[20px] w-[113px] border border-b-0 border-[#c0c0c0] bg-white pl-px leading-[21px] tracking-[0.200px] whitespace-nowrap text-black">
        第 1 项(共 6 项)
      </div>
      <Svg w={5} h={9} className="ml-[11px]"><path d="M0 0V9L5 4.500Z" fill="#333" /></Svg>
      <Svg w={9} h={9} className="ml-[15px]"><path d="M8 0V9" stroke="#333" strokeWidth="1.500" /><path d="M0 0V9L5 4.500Z" fill="#333" /></Svg>
      <Svg w={16} h={9} className="ml-[8px]">
        <path d="M0 0V9L5 4.500Z" fill="#333" />
        <path d="M12 .5V8.500M8 4.500H16M9 1.500L15 7.500M15 1.500L9 7.500" stroke="#e8b663" strokeWidth="1.200" />
      </Svg>
      <div className="ml-[7px] flex h-full w-[104px] items-center border-r border-l border-[#b7b9c0] pl-[10px] text-[#aaa]">
        <Svg w={20} h={18}>
          <path d="M0 0H14V2L9 7V13H6V7L0 2Z" fill="#b0b0b0" />
          <path d="M3 1.500L7.500 6.500V12" stroke="#eee" />
          <path d="M10 9.500L18 17.500M18 9.500L10 17.500" stroke="#a5a5a5" strokeWidth="2" />
        </Svg>
        <span className="ml-[2px] whitespace-nowrap">无筛选器</span>
      </div>
      <div className="mt-px ml-[6px] h-[20px] w-[88px] border border-b-0 border-[#c0c0c0] bg-white pl-px leading-[21px] text-black">搜索</div>
    </div>
  );
}

function StatusBar() {
  return (
    <div className="flex h-[27px] shrink-0 items-center border-t border-[#c6c6c6] bg-[#f3f3f3] text-[#262626]">
      <span className="ml-[10px] flex-1 pb-px">就绪</span>
      <span className="mr-[24px] pb-[2px]">数字</span>
      <span className="flex h-full w-[50px] items-center justify-center bg-[#c6c6c6] pr-[2px]">
        <Svg w={17} h={16}>
          <path d="M.5 .5H16.500V15.500H.5ZM.5 4.500H16.500M5.500 4.500V15M8 8.500H10M12 8.500H15M8 11.500H10M12 11.500H15" stroke="#666" />
        </Svg>
      </span>
      <span className="flex w-[50px] justify-center pr-[2px] text-[10px] text-[#555]">SQL</span>
      <span className="flex w-[65px] pl-[16px]">
        <Svg w={17} h={15}>
          <path d="M.5 9.500H16.500V14.500H.5ZM4 10V12M7 10V12M10 10V12M13 10V12M1 1V7H8M6 7L14 1" stroke="#555" />
        </Svg>
      </span>
    </div>
  );
}

export default function App() {
  return (
    <Fragment>
      <div className="relative flex h-[892px] w-[1320px] flex-col overflow-hidden border border-t-0 border-[#a4373a] bg-[#f3f3f3] font-['Open_Sans','Noto_Sans_CJK_SC',sans-serif] text-[15px] leading-[22px]">
        <div className="bg-[#a4373a]">
          <TitleBar />
          <MenuBar />
        </div>
        <Ribbon />
        <SecurityBar />
        <div className="flex min-h-0 flex-1">
          <NavPane />
          <div className="w-[5px] shrink-0 bg-[#eeeff2]" />
          <div className="flex min-w-0 flex-1 flex-col border-l border-[#8c9197]">
            <DocumentTabs />
            <Datasheet />
            <RecordBar />
          </div>
        </div>
        <StatusBar />

        {/* highlight over the third column */}
        <div className="absolute top-[245px] left-[477px] h-[249px] w-[130px] border-3 border-[#fc3a3a]" />
        <div className="absolute top-[860px] left-[1131px] font-['Lato','Noto_Sans_CJK_SC',sans-serif] text-[19px] leading-[24px] font-light tracking-[0.250px] whitespace-nowrap text-[#777] [text-shadow:1px_1px_0_#fff]">
          CSDN @十三先生po
        </div>
      </div>
    </Fragment>
  );
}
